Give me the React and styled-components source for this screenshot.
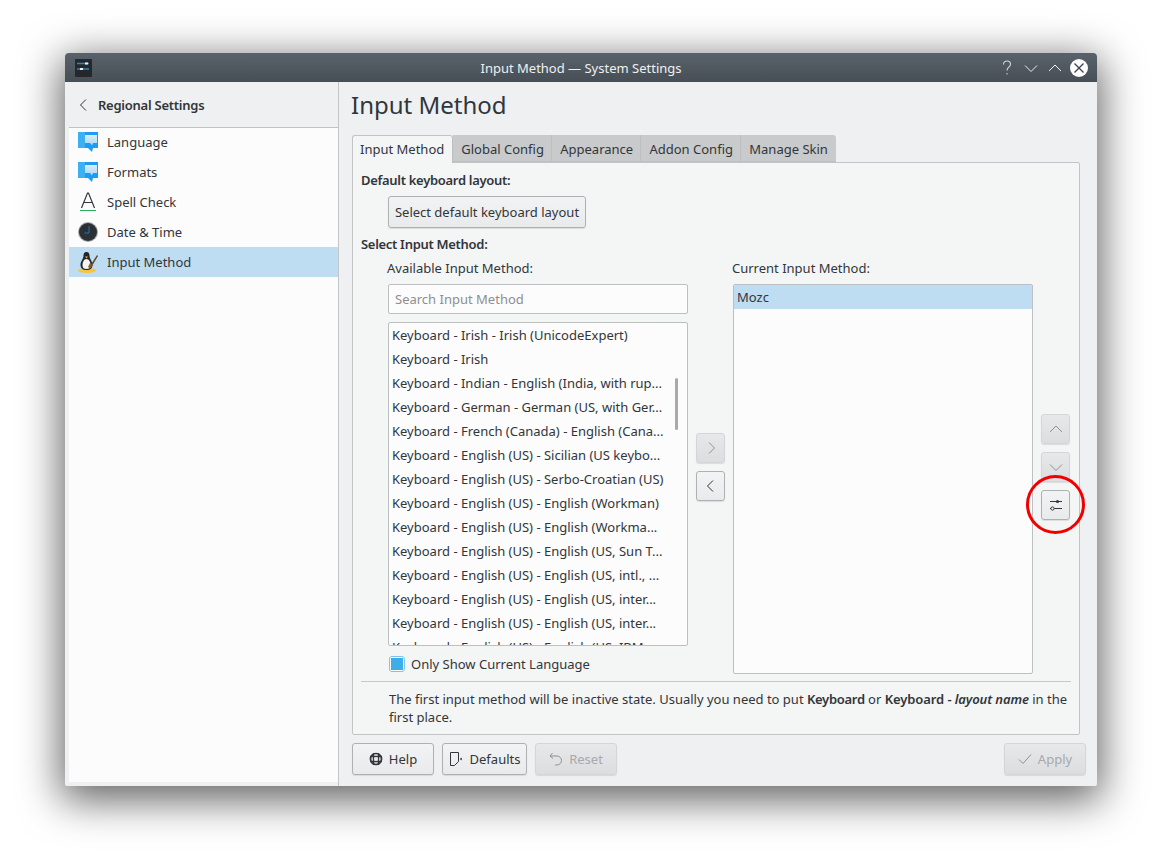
import React from "react";
import styled, { createGlobalStyle } from "styled-components";

const GlobalStyle = createGlobalStyle`
  html, body {
    margin: 0;
    padding: 0;
    background: #fff;
  }
  body {
    font-family: "Noto Sans", "Open Sans", sans-serif;
    font-size: 13px;
    color: #31363b;
  }
`;

const Desktop = styled.div`
  width: 1162px;
  height: 863px;
  padding: 53px 65px 77px;
  box-sizing: border-box;
  overflow: hidden;
`;
const Window = styled.div`
  width: 1032px;
  height: 733px;
  display: flex;
  flex-direction: column;
  border-radius: 4px 4px 2px 2px;
  background: #eff0f1;
  box-shadow: 0 10px 42px 4px rgba(0, 0, 0, 0.62);
  overflow: hidden;
`;
const TitleBar = styled.div`
  height: 29px;
  flex: none;
  display: flex;
  align-items: center;
  background: linear-gradient(#59626b, #474e55);
  color: #eff0f1;
`;
const AppIcon = styled.div`
  width: 17px;
  height: 18px;
  margin-left: 10px;
  background: #24282c;
  border-radius: 1px;
  display: flex;
`;
const TitleText = styled.div`
  flex: 1;
  text-align: center;
  margin-left: 72px;
`;
const TitleButtons = styled.div`
  display: flex;
  align-items: center;
  gap: 7px;
  padding-right: 9px;
`;
const TitleButton = styled.div`
  width: 17px;
  height: 17px;
  display: flex;
  align-items: center;
  justify-content: center;
`;
const CloseDot = styled(TitleButton)`
  width: 18px;
  height: 18px;
  border-radius: 50%;
  background: #fcfcfc;
`;
const Body = styled.div`
  flex: 1;
  display: flex;
  min-height: 0;
`;
const Sidebar = styled.div`
  width: 274px;
  flex: none;
  display: flex;
  flex-direction: column;
  padding-left: 4px;
  box-sizing: border-box;
  border-right: 1px solid #c4c6c8;
`;
const SidebarHeader = styled.div`
  height: 46px;
  flex: none;
  display: flex;
  align-items: center;
  box-sizing: border-box;
  border-bottom: 1px solid #bfc1c3;
  position: relative;
  z-index: 1;
  padding-left: 7px;
  font-weight: 600;
  letter-spacing: -0.25px;
  gap: 6px;
`;
const SidebarList = styled.div`
  flex: 1;
  background: #fcfcfc;
  margin: -1px 0 4px;
`;
const SidebarRow = styled.div`
  height: 30px;
  display: flex;
  align-items: center;
  padding-left: 9px;
  gap: 9px;
  background: ${(p) => (p.$active ? "#bfddf2" : "transparent")};
`;
const RowIcon = styled.svg`
  width: 20px;
  height: 24px;
  flex: none;
`;
const Main = styled.div`
  flex: 1;
  min-width: 0;
  display: flex;
  flex-direction: column;
  padding: 0 11px 11px 13px;
`;
const PageTitle = styled.div`
  font-size: 24px;
  line-height: 33px;
  height: 33px;
  margin: 6px 0 13px -1px;
`;
const Tabs = styled.div`
  display: flex;
  height: 28px;
  position: relative;
  top: 1px;
  z-index: 1;
`;
const Tab = styled.div`
  display: flex;
  align-items: center;
  box-sizing: border-box;
  padding: ${(p) => (p.$active ? "0 8px 2px 7px" : "2px 7.3px 0 8px")};
  height: ${(p) => (p.$active ? "28px" : "27px")};
  background: ${(p) => (p.$active ? "#f4f5f5" : "#c9cacb")};
  border-right: 1px solid #bcbec0;
  border-left: ${(p) => (p.$active ? "1px solid #c2c4c6" : "0")};
  border-top: ${(p) => (p.$active ? "1px solid #c2c4c6" : "0")};
  border-bottom: ${(p) => (p.$active ? "0" : "1px solid #bcbec0")};
  border-radius: ${(p) => (p.$active ? "3px 3px 0 0" : "0")};
  &:last-child {
    border-top-right-radius: 3px;
    border-right: 0;
    padding-right: 8px;
  }
`;
const Pane = styled.div`
  width: 728px;
  height: 574px;
  box-sizing: border-box;
  background: #f4f5f5;
  border: 1px solid #c2c4c6;
  border-radius: 0 2px 2px 2px;
  padding: 8px 8px 0;
  display: flex;
  flex-direction: column;
`;
const Heading = styled.div`
  font-weight: 600;
  letter-spacing: -0.3px;
  line-height: 18px;
`;
const Button = styled.div`
  box-sizing: border-box;
  display: inline-flex;
  align-items: center;
  justify-content: center;
  height: ${(p) => p.$h || 32}px;
  width: ${(p) => (p.$w ? `${p.$w}px` : "auto")};
  gap: 6px;
  background: ${(p) =>
    p.$disabled
      ? "linear-gradient(#e7e8e9, #dcdddf)"
      : "linear-gradient(#f2f3f4, #e9eaeb)"};
  border: 1px solid ${(p) => (p.$disabled ? "#d3d5d6" : "#aeb0b2")};
  border-radius: 3px;
  box-shadow: 0 1px 1px rgba(0, 0, 0, 0.1);
  color: ${(p) => (p.$disabled ? "#a7a9ab" : "#31363b")};
  flex: none;
  position: relative;
`;
const KeyboardRow = styled.div`
  padding: 7px 0 7px 27px;
`;
const Columns = styled.div`
  display: grid;
  grid-template-columns: 300px 45px 300px 37px;
  grid-template-rows: 25px 1fr;
  margin: 6px 0 0 27px;
`;
const ColumnLabel = styled.div`
  line-height: 18px;
  margin-left: -1px;
`;
const LeftColumn = styled.div`
  display: flex;
  flex-direction: column;
  height: 390px;
`;
const SearchBox = styled.div`
  height: 30px;
  flex: none;
  box-sizing: border-box;
  background: #fcfcfc;
  border: 1px solid #bdbfc1;
  border-radius: 2px;
  padding: 0 6px;
  display: flex;
  align-items: center;
  color: #8d8f91;
`;
const AvailableList = styled.div`
  margin-top: 8px;
  height: 324px;
  flex: none;
  box-sizing: border-box;
  background: #fcfcfc;
  border: 1px solid #bdbfc1;
  border-radius: 2px;
  overflow: hidden;
  position: relative;
`;
const ListRow = styled.div`
  height: 24px;
  line-height: 24px;
  padding: 0 3px;
  white-space: nowrap;
  background: ${(p) => (p.$active ? "#bfddf2" : "transparent")};
`;
const ScrollThumb = styled.div`
  position: absolute;
  right: 9px;
  top: 55px;
  width: 3px;
  height: 52px;
  border-radius: 2px;
  background: #a7a9ab;
`;
const CheckRow = styled.div`
  display: flex;
  align-items: center;
  gap: 6px;
  margin-top: 9px;
  padding-left: 1px;
  height: 18px;
`;
const CheckBox = styled.div`
  width: 16px;
  height: 16px;
  box-sizing: border-box;
  border: 1px solid #7ec4ef;
  border-radius: 3px;
  background: #fcfcfc;
  padding: 1px;
  display: flex;
`;
const CheckFill = styled.div`
  flex: 1;
  background: #3daee9;
`;
const MoveButtons = styled.div`
  display: flex;
  flex-direction: column;
  gap: 8px;
  padding: 149px 0 0 8px;
`;
const CurrentList = styled.div`
  height: 390px;
  box-sizing: border-box;
  background: #fcfcfc;
  border: 1px solid #bdbfc1;
  border-radius: 2px;
  overflow: hidden;
`;
const OrderButtons = styled.div`
  display: flex;
  flex-direction: column;
  gap: 8px;
  padding: 130px 0 0 8px;
`;
const Highlight = styled.div`
  position: absolute;
  left: -16px;
  top: -16px;
  width: 59px;
  height: 59px;
  box-sizing: border-box;
  border: 3px solid #f00000;
  border-radius: 50%;
`;
const Separator = styled.div`
  height: 1px;
  background: #c6c8ca;
  margin: 7px 0 8px;
`;
const Note = styled.div`
  padding-left: 28px;
  line-height: 18px;
  b {
    font-weight: 600;
    letter-spacing: -0.3px;
  }
  b + b {
    letter-spacing: -0.1px;
  }
`;
const Footer = styled.div`
  display: flex;
  gap: 8px;
  margin-top: 8px;
`;
const Spacer = styled.div`
  flex: 1;
`;

const Chat = () => (
  <RowIcon viewBox="0 0 20 24">
    <defs>
      <linearGradient id="bubble" x1="0" y1="0" x2="0" y2="1">
        <stop offset="0" stopColor="#dcebf8" />
        <stop offset="1" stopColor="#a6d6fa" />
      </linearGradient>
    </defs>
    <path d="M0 2h20v16h-5l-1 4-4-4H0z" fill="#1e9bf3" />
    <path d="M0 2h7v16H0z" fill="#3daff5" />
    <path d="M7 5h12v8h-4l-1 2.500-2-2.500H7z" fill="url(#bubble)" />
  </RowIcon>
);

const SpellIcon = () => (
  <RowIcon viewBox="0 0 20 24">
    <path d="M3.500 18 9.500 3h1l6 15M5.500 12.500h9" fill="none" stroke="#31363b" strokeWidth="1.200" />
    <rect x="2" y="20" width="16" height="1" fill="#27ae60" />
  </RowIcon>
);

const ClockIcon = () => (
  <RowIcon viewBox="0 0 20 24">
    <circle cx="10" cy="12" r="10" fill="#a4a7aa" />
    <circle cx="10" cy="12" r="9" fill="#2b3036" />
    <path d="M11 6v7H6.500" fill="none" stroke="#2f6ea5" strokeWidth="1" />
  </RowIcon>
);

const TuxIcon = () => (
  <RowIcon viewBox="0 0 20 24">
    <ellipse cx="9" cy="20.500" rx="9" ry="2.500" fill="#f5c53a" />
    <path d="M8.500 2c2.500 0 3 2 3 4 0 3 3 5 3 9 0 3-2 5-6 5s-6-2-6-5c0-4 3-6 3-9 0-2 .5-4 3-4z" fill="#23262a" />
    <path d="M8.500 9c2.500 0 4 3 4 6s-1.500 4-4 4-4-1-4-4 1.500-6 4-6z" fill="#f4f4f2" />
    <path d="M7 6.500h3L8.500 8.500z" fill="#f0b429" />
    <path d="m19 5-7 11 1.500 1L20 6z" fill="#5b4a3a" />
    <path d="m12 13 2.500 1.500-2 4-2.500-1.500z" fill="#8a5a2b" />
  </RowIcon>
);

const Chevron = ({ dir, color = "#31363b", size = 16 }) => {
  const paths = {
    left: "M10 2.500 4.500 8l5.500 5.500",
    right: "M6 2.500 11.500 8 6 13.500",
    up: "M2 11l6-6 6 6",
    down: "M2 5.500l6 6 6-6",
  };
  return (
    <svg width={size} height={size} viewBox="0 0 16 16" fill="none">
      <path d={paths[dir]} stroke={color} strokeWidth="1" />
    </svg>
  );
};

const Sliders = ({ color = "#31363b" }) => (
  <svg width="14" height="14" viewBox="0 0 14 14" fill="none">
    <path d="M1 3.500h12M1 10.500h12" stroke={color} strokeWidth="1" />
    <circle cx="8.500" cy="3.500" r="1.600" fill={color} />
    <circle cx="3.500" cy="10.500" r="1.600" fill="#f2f3f4" stroke={color} />
  </svg>
);

const HelpIcon = () => (
  <svg width="14" height="14" viewBox="0 0 14 14" fill="none" stroke="#31363b">
    <circle cx="7" cy="7" r="5.500" strokeWidth="1.700" />
    <path d="M4.500 1v12M9.500 1v12M1 4.500h12M1 9.500h12" strokeWidth="1.400" />
    <rect x="5.500" y="5.500" width="3" height="3" fill="#eceded" strokeWidth="0" />
  </svg>
);

const DefaultsIcon = () => (
  <svg width="15" height="16" viewBox="1 0 15 16" fill="none" stroke="#31363b">
    <path d="M2.500 1.500h8v9l-4 4h-4z" strokeWidth="1" />
    <path d="M13.500 7v2L12 8z" fill="#31363b" strokeWidth="0.500" />
  </svg>
);

const ResetIcon = () => (
  <svg width="14" height="16" viewBox="1 0 14 16" fill="none" stroke="#8f9193">
    <path d="M4.500 2 2 5l3 2.500M2.500 5H9a4 4 0 0 1 0 9H7" strokeWidth="1" />
  </svg>
);

const CheckIcon = () => (
  <svg width="14" height="16" viewBox="1 0 14 16" fill="none" stroke="#8f9193">
    <path d="M2 8.500 6 12.500 14 3.500" strokeWidth="1" />
  </svg>
);

const sidebarItems = [
  { label: "Language", icon: <Chat /> },
  { label: "Formats", icon: <Chat /> },
  { label: "Spell Check", icon: <SpellIcon /> },
  { label: "Date & Time", icon: <ClockIcon /> },
  { label: "Input Method", icon: <TuxIcon />, active: true },
];

const tabs = ["Input Method", "Global Config", "Appearance", "Addon Config", "Manage Skin"];

const available = [
  "Keyboard - Irish - Irish (UnicodeExpert)",
  "Keyboard - Irish",
  "Keyboard - Indian - English (India, with rup...",
  "Keyboard - German - German (US, with Ger...",
  "Keyboard - French (Canada) - English (Cana...",
  "Keyboard - English (US) - Sicilian (US keybo...",
  "Keyboard - English (US) - Serbo-Croatian (US)",
  "Keyboard - English (US) - English (Workman)",
  "Keyboard - English (US) - English (Workma...",
  "Keyboard - English (US) - English (US, Sun T...",
  "Keyboard - English (US) - English (US, intl., ...",
  "Keyboard - English (US) - English (US, inter...",
  "Keyboard - English (US) - English (US, inter...",
  "Keyboard - English (US) - English (US, IBM...",
];

export default function App() {
  return (
    <>
      <GlobalStyle />
      <Desktop>
        <Window>
          <TitleBar>
            <AppIcon>
              <svg width="17" height="18" viewBox="0 0 17 18" fill="none">
                <path d="M2 4.500h12" stroke="#2f86b8" strokeWidth="1.500" />
                <path d="M2 10h12" stroke="#2f86b8" strokeWidth="1.500" />
                <rect x="10" y="3.500" width="3" height="2" fill="#eff0f1" />
                <rect x="5" y="9" width="3" height="2" fill="#eff0f1" />
              </svg>
            </AppIcon>
            <TitleText>Input Method — System Settings</TitleText>
            <TitleButtons>
              <TitleButton>
                <svg width="16" height="18" viewBox="0 0 16 18" fill="none" stroke="#d3d6d9">
                  <path d="M4.500 5.500C4.500 3 6 2 8 2s3.500 1.200 3.500 3.200c0 3-3.500 3-3.500 6.300" strokeWidth="1.100" />
                  <rect x="7.500" y="14" width="1" height="1.500" fill="#d3d6d9" strokeWidth="0" />
                </svg>
              </TitleButton>
              <TitleButton>
                <Chevron dir="down" color="#eff0f1" />
              </TitleButton>
              <TitleButton>
                <Chevron dir="up" color="#eff0f1" />
              </TitleButton>
              <CloseDot>
                <svg width="12" height="12" viewBox="0 0 12 12" fill="none">
                  <path d="M1.500 1.500l9 9M10.500 1.500l-9 9" stroke="#3b4147" strokeWidth="1.300" />
                </svg>
              </CloseDot>
            </TitleButtons>
          </TitleBar>
          <Body>
            <Sidebar>
              <SidebarHeader>
                <Chevron dir="left" />
                <span>Regional Settings</span>
              </SidebarHeader>
              <SidebarList>
                {sidebarItems.map((item) => (
                  <SidebarRow key={item.label} $active={item.active}>
                    {item.icon}
                    <span>{item.label}</span>
                  </SidebarRow>
                ))}
              </SidebarList>
            </Sidebar>
            <Main>
              <PageTitle>Input Method</PageTitle>
              <Tabs>
                {tabs.map((tab, i) => (
                  <Tab key={tab} $active={i === 0}>
                    {tab}
                  </Tab>
                ))}
              </Tabs>
              <Pane>
                <Heading>Default keyboard layout:</Heading>
                <KeyboardRow>
                  <Button $w={198}>Select default keyboard layout</Button>
                </KeyboardRow>
                <Heading>Select Input Method:</Heading>
                <Columns>
                  <ColumnLabel>Available Input Method:</ColumnLabel>
                  <span />
                  <ColumnLabel>Current Input Method:</ColumnLabel>
                  <span />
                  <LeftColumn>
                    <SearchBox>Search Input Method</SearchBox>
                    <AvailableList>
                      {available.map((row, i) => (
                        <ListRow key={i}>{row}</ListRow>
                      ))}
                      <ScrollThumb />
                    </AvailableList>
                    <CheckRow>
                      <CheckBox>
                        <CheckFill />
                      </CheckBox>
                      <span>Only Show Current Language</span>
                    </CheckRow>
                  </LeftColumn>
                  <MoveButtons>
                    <Button $w={29} $h={30} $disabled>
                      <Chevron dir="right" color="#8f9193" />
                    </Button>
                    <Button $w={29} $h={30}>
                      <Chevron dir="left" />
                    </Button>
                  </MoveButtons>
                  <CurrentList>
                    <ListRow $active>Mozc</ListRow>
                  </CurrentList>
                  <OrderButtons>
                    <Button $w={29} $h={30} $disabled>
                      <Chevron dir="up" color="#8f9193" />
                    </Button>
                    <Button $w={29} $h={30} $disabled>
                      <Chevron dir="down" color="#8f9193" />
                    </Button>
                    <Button $w={29} $h={30}>
                      <Sliders />
                      <Highlight />
                    </Button>
                  </OrderButtons>
                </Columns>
                <Separator />
                <Note>
                  The first input method will be inactive state. Usually you need to put <b>Keyboard</b> or{" "}
                  <b>
                    Keyboard - <i>layout name</i>
                  </b>{" "}
                  in the first place.
                </Note>
              </Pane>
              <Footer>
                <Button $w={82}>
                  <HelpIcon />
                  Help
                </Button>
                <Button $w={85}>
                  <DefaultsIcon />
                  Defaults
                </Button>
                <Button $w={82} $disabled>
                  <ResetIcon />
                  Reset
                </Button>
                <Spacer />
                <Button $w={82} $disabled>
                  <CheckIcon />
                  Apply
                </Button>
              </Footer>
            </Main>
          </Body>
        </Window>
      </Desktop>
    </>
  );
}
